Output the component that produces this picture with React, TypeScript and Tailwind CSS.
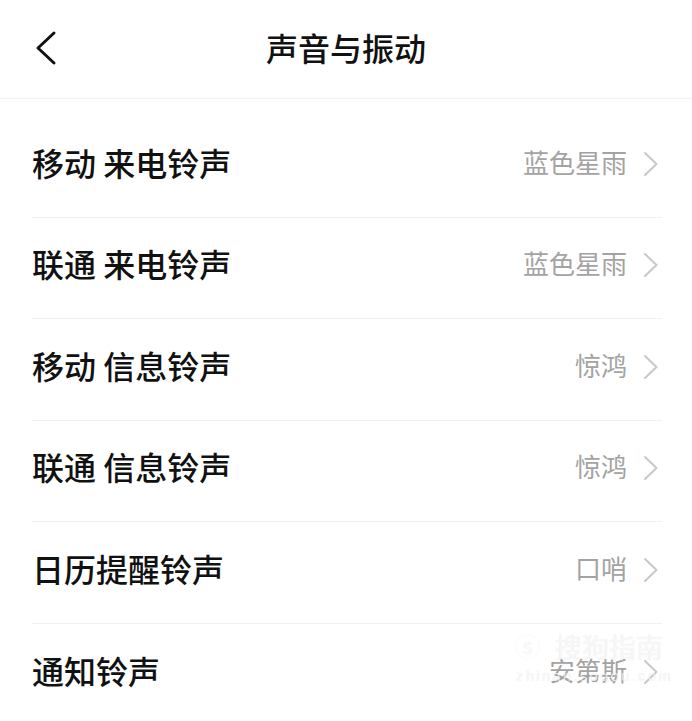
import React from 'react';

const rows = [
  { label: '移动 来电铃声', value: '蓝色星雨' },
  { label: '联通 来电铃声', value: '蓝色星雨' },
  { label: '移动 信息铃声', value: '惊鸿' },
  { label: '联通 信息铃声', value: '惊鸿' },
  { label: '日历提醒铃声', value: '口哨' },
  { label: '通知铃声', value: '安第斯' },
];

const Chevron = () => (
  <svg width="16" height="26" viewBox="0 0 16 26" fill="none" className="shrink-0">
    <path d="M2 2 L13.5 13 L2 24" stroke="#c8c8c8" strokeWidth="2" strokeLinecap="round" strokeLinejoin="round" />
  </svg>
);

const App = () => {
  return (
    <div
      className="relative w-[692px] h-[721px] bg-white overflow-hidden text-[#111]"
      style={{ fontFamily: '"Noto Sans CJK SC", "Noto Sans", sans-serif' }}
    >
      {/* header */}
      <div className="grid grid-cols-[1fr_auto_1fr] items-center h-[99px] border-b border-[#f3f3f3]">
        <div className="pl-[35px] pb-[2px]">
          <svg width="24" height="36" viewBox="0 0 24 36" fill="none">
            <path d="M19 3 L3 18 L19 33" stroke="#111" strokeWidth="3" strokeLinecap="round" strokeLinejoin="round" />
          </svg>
        </div>
        <h1 className="text-[32px] leading-none font-medium pb-[4px]">声音与振动</h1>
        <div />
      </div>

      {/* list */}
      <div className="pl-[32px] pr-[30px] pt-[17px]">
        {rows.map((row, i) => (
          <div
            key={i}
            className={
              'flex items-center justify-between h-[101.5px] ' +
              (i < rows.length - 1 ? 'border-b border-[#f0f0f0]' : '')
            }
          >
            <span className="text-[32px] leading-none font-medium pb-[9px]">{row.label}</span>
            <div className="flex items-center gap-[16px] pr-[3px] pb-[5px]">
              <span className="text-[26px] leading-none text-[#a3a3a3] pb-[4px]">{row.value}</span>
              <Chevron />
            </div>
          </div>
        ))}
      </div>

      {/* watermark */}
      <div className="absolute left-[516px] top-[633px] flex flex-col items-start pointer-events-none select-none">
        <div className="flex items-center gap-[16px]">
          <div className="w-[23px] h-[23px] rounded-full border-2 border-white/80 flex items-center justify-center text-[16px] leading-none font-bold text-white/80 [text-shadow:0_0_1px_rgba(0,0,0,0.12)] shadow-[0_0_1px_rgba(0,0,0,0.14)]">
            S
          </div>
          <span className="text-[27px] leading-none text-white/75 [text-shadow:0_0_1px_rgba(0,0,0,0.13)]">搜狗指南</span>
        </div>
        <span
          className="mt-[8px] text-[15px] leading-none tracking-[2.2px] text-white/75 [text-shadow:0_0_1px_rgba(0,0,0,0.13)]"
          style={{ fontFamily: '"Liberation Sans", sans-serif' }}
        >
          zhinan.sogou.com
        </span>
      </div>
    </div>
  );
};

export default App;
